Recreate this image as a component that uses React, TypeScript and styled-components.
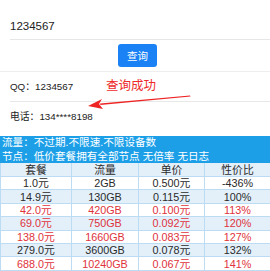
import React from "react";
import styled, { createGlobalStyle } from "styled-components";

const Global = createGlobalStyle`
  body {
    margin: 0;
    background: #fff;
    font-family: "Liberation Sans", Arial, "Noto Sans CJK SC", sans-serif;
    color: #222;
  }
`;

const Page = styled.div`
  width: 270px;
  height: 271px;
  overflow: hidden;
  position: relative;
`;

const InputRow = styled.div`
  margin-left: 10px;
  height: 40px;
  box-sizing: border-box;
  padding-top: 19px;
  font-size: 11.5px;
  line-height: 14px;
  border-bottom: 1px solid #e6e6e6;
`;

const ButtonRow = styled.div`
  display: flex;
  justify-content: center;
  padding: 4px 0 4px 5px;
  border-bottom: 1px solid #eeeeee;
`;

const QueryButton = styled.button`
  width: 39px;
  height: 23px;
  border: none;
  border-radius: 3px;
  background: #1b82f5;
  color: #fff;
  font-family: "Noto Sans CJK SC", sans-serif;
  font-size: 10.5px;
  padding: 0;
`;

const InfoRow = styled.div<{ $line?: boolean }>`
  display: flex;
  align-items: center;
  height: 29px;
  margin-left: 10px;
  font-size: 9.8px;
  line-height: 12px;
  color: #222;
  border-bottom: ${(p) => (p.$line ? "1px solid #e8e8e8" : "none")};
`;

const Label = styled.span`
  width: 96px;
`;

const Success = styled.span`
  color: #ee2a2a;
  font-family: "Liberation Sans", "Noto Sans CJK SC", sans-serif;
  font-size: 12.5px;
  margin-top: -2px;
`;

const Arrow = styled.svg`
  position: absolute;
  left: 86px;
  top: 92px;
`;

const Notice = styled.div`
  margin-top: 5px;
  background: #1d9fe8;
  color: #fff;
  font-family: "Liberation Sans", "Noto Sans CJK SC", sans-serif;
  font-size: 10.6px;
  line-height: 13.5px;
  padding-left: 2px;
  white-space: nowrap;
`;

const Table = styled.div`
  display: grid;
  grid-template-columns: 71px 67px 66px 66px;
  border-left: 1px solid #bcdcf3;
`;

const Cell = styled.div<{ $red?: boolean; $shade?: boolean; $head?: boolean }>`
  height: ${(p) => (p.$head ? "14px" : "13.4px")};
  box-sizing: border-box;
  display: flex;
  align-items: center;
  justify-content: center;
  font-size: 10.8px;
  line-height: 12px;
  font-family: "Liberation Sans", "Noto Sans CJK SC", sans-serif;
  color: ${(p) => (p.$red ? "#e0323c" : "#2a2a2a")};
  background: ${(p) => (p.$shade ? "#e3f0fa" : "#ffffff")};
  border-right: 1px solid #bcdcf3;
  border-bottom: 1px solid #bcdcf3;
`;

const rows = [
  { price: "1.0元", flow: "2GB", unit: "0.500元", ratio: "-436%", red: false },
  { price: "14.9元", flow: "130GB", unit: "0.115元", ratio: "100%", red: false },
  { price: "42.0元", flow: "420GB", unit: "0.100元", ratio: "113%", red: true },
  { price: "69.0元", flow: "750GB", unit: "0.092元", ratio: "120%", red: true },
  { price: "138.0元", flow: "1660GB", unit: "0.083元", ratio: "127%", red: true },
  { price: "279.0元", flow: "3600GB", unit: "0.078元", ratio: "132%", red: false },
  { price: "688.0元", flow: "10240GB", unit: "0.067元", ratio: "141%", red: true },
];

const App = () => {
  return (
    <Page>
      <Global />
      <InputRow>1234567</InputRow>
      <ButtonRow>
        <QueryButton>查询</QueryButton>
      </ButtonRow>
      <InfoRow $line>
        <Label>QQ：1234567</Label>
        <Success>查询成功</Success>
      </InfoRow>
      <InfoRow>电话：134****8198</InfoRow>
      <Notice>
        <div>流量：不过期.不限速.不限设备数</div>
        <div>节点：低价套餐拥有全部节点 无倍率 无日志</div>
      </Notice>
      <Table>
        {["套餐", "流量", "单价", "性价比"].map((h) => (
          <Cell key={h} $head $shade>
            {h}
          </Cell>
        ))}
        {rows.map((r, i) =>
          [r.price, r.flow, r.unit, r.ratio].map((v, j) => (
            <Cell key={i + "-" + j} $red={r.red} $shade={i % 2 === 1}>
              {v}
            </Cell>
          ))
        )}
      </Table>
      <Arrow width="108" height="18" viewBox="0 0 108 18">
        <path d="M104 3.5 L14 11.5 L14.4 13 L104.5 4.5 Z" fill="#ee2424" />
        <path d="M2 14 L16 7 L13 12 L17 17 Z" fill="#ee2424" />
      </Arrow>
    </Page>
  );
};

export default App;
